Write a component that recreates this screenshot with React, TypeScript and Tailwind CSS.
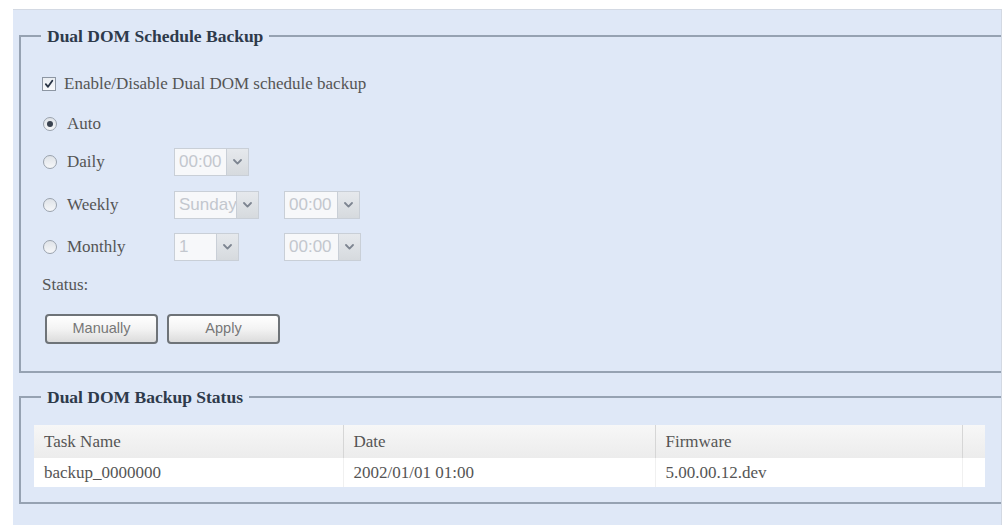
import React from 'react';

const serif = { fontFamily: '"Liberation Serif", "Times New Roman", serif' };

function Checkbox() {
  return (
    <span className="grid h-[14px] w-[14px] shrink-0 place-items-center border border-[#8d96a3] bg-gradient-to-b from-[#e9edf2] to-[#f8f9fb]">
      <svg width="10" height="10" viewBox="0 0 10 10" fill="none" stroke="#2a3546" strokeWidth="1.8" strokeLinecap="round" strokeLinejoin="round">
        <path d="M1.8 5.2 L4 7.8 L8.3 1.8" />
      </svg>
    </span>
  );
}

function Radio({ checked }: { checked?: boolean }) {
  return (
    <span className="grid h-[14px] w-[14px] shrink-0 place-items-center rounded-full border border-[#9aa2ad] bg-gradient-to-b from-[#dfe3e8] to-[#f6f7f9]">
      {checked && <span className="h-[6px] w-[6px] rounded-full bg-[#3a4350]" />}
    </span>
  );
}

function Select({ value, width }: { value: string; width: number }) {
  return (
    <div className="flex h-[28px] border border-[#c9cfd7] bg-[#f3f5f8]" style={{ width }}>
      <div className="flex flex-1 items-center overflow-hidden whitespace-nowrap border-r border-[#c9cfd7] bg-[#f7f8fa] pl-[4px] font-['Liberation_Sans',Arial,sans-serif] text-[17px] text-[#c3c7ce]">
        {value}
      </div>
      <div className="grid w-[21px] shrink-0 place-items-center bg-gradient-to-b from-[#e6e9ed] to-[#d6dade]">
        <svg width="9" height="6" viewBox="0 0 9 6" fill="none" stroke="#7d8591" strokeWidth="1.8" strokeLinecap="round" strokeLinejoin="round">
          <path d="M1 1 L4.5 4.6 L8 1" />
        </svg>
      </div>
    </div>
  );
}

function Button({ children }: { children: React.ReactNode }) {
  return (
    <button className="h-[30px] w-[113px] rounded-[4px] border-2 border-[#6e7378] bg-gradient-to-b from-[#ffffff] via-[#f3f3f3] to-[#dcdcdc] font-['Liberation_Sans',Arial,sans-serif] text-[14.5px] text-[#777]">
      {children}
    </button>
  );
}

function Legend({ children }: { children: React.ReactNode }) {
  return (
    <legend className="ml-[20px] h-[20px] px-[6px] text-[17.5px] font-bold leading-[20px] text-[#2e3a4b]" style={serif}>
      {children}
    </legend>
  );
}

function ScheduleRow({ label, children }: { label: string; children?: React.ReactNode }) {
  return (
    <div className="flex h-[28px] items-center">
      <div className="flex w-[131px] items-center gap-[10px]">
        <Radio />
        <span>{label}</span>
      </div>
      <div className="flex items-center gap-[25px]">{children}</div>
    </div>
  );
}

export default function App() {
  return (
    <div className="h-[532px] w-[1006px] overflow-hidden bg-white pl-[13px] pt-[9px]" style={serif}>
      <div className="h-[516px] w-[989px] border-t border-r border-[#d3d9e3] bg-[#dfe8f7] pl-[6px] pt-[16px] text-[17px] text-[#555]">
        <fieldset className="border-2 border-r-0 border-[#96a2b2]">
          <Legend>Dual DOM Schedule Backup</Legend>
          <div className="pb-[27px] pl-[21px]">
            <div className="mt-[26px] flex h-[24px] items-center gap-[8px]">
              <Checkbox />
              <span>Enable/Disable Dual DOM schedule backup</span>
            </div>
            <div className="mt-[16px] flex h-[24px] items-center gap-[10px] pl-[1px]">
              <Radio checked />
              <span>Auto</span>
            </div>
            <div className="mt-[12px] pl-[1px]">
              <ScheduleRow label="Daily">
                <Select value="00:00" width={75} />
              </ScheduleRow>
            </div>
            <div className="mt-[15px] pl-[1px]">
              <ScheduleRow label="Weekly">
                <Select value="Sunday" width={85} />
                <Select value="00:00" width={76} />
              </ScheduleRow>
            </div>
            <div className="mt-[14px] pl-[1px]">
              <ScheduleRow label="Monthly">
                <Select value="1" width={65} />
                <div className="ml-[20px]">
                  <Select value="00:00" width={77} />
                </div>
              </ScheduleRow>
            </div>
            <div className="mt-[14px] flex h-[20px] items-center">Status:</div>
            <div className="mt-[19px] flex gap-[9px] pl-[3px]">
              <Button>Manually</Button>
              <Button>Apply</Button>
            </div>
          </div>
        </fieldset>

        <fieldset className="mt-[14px] border-2 border-r-0 border-[#96a2b2]">
          <Legend>Dual DOM Backup Status</Legend>
          <div className="pb-[15px] pl-[13px] pr-[15px]">
            <table className="mt-[18px] w-[951px] border-collapse text-left text-[17px] text-[#555]">
              <thead>
                <tr className="h-[33px] bg-gradient-to-b from-[#f7f7f7] to-[#ececec]">
                  <th className="w-[309px] border-r border-[#d6d6d6] pl-[10px] font-normal">Task Name</th>
                  <th className="w-[312px] border-r border-[#d6d6d6] pl-[10px] font-normal">Date</th>
                  <th className="w-[307px] border-r border-[#d6d6d6] pl-[10px] font-normal">Firmware</th>
                  <th className="font-normal" />
                </tr>
              </thead>
              <tbody>
                <tr className="h-[29px] bg-white">
                  <td className="border-r border-[#f0f0f0] pl-[10px]">backup_0000000</td>
                  <td className="border-r border-[#f0f0f0] pl-[10px]">2002/01/01 01:00</td>
                  <td className="border-r border-[#f0f0f0] pl-[10px]">5.00.00.12.dev</td>
                  <td />
                </tr>
              </tbody>
            </table>
          </div>
        </fieldset>
      </div>
    </div>
  );
}
